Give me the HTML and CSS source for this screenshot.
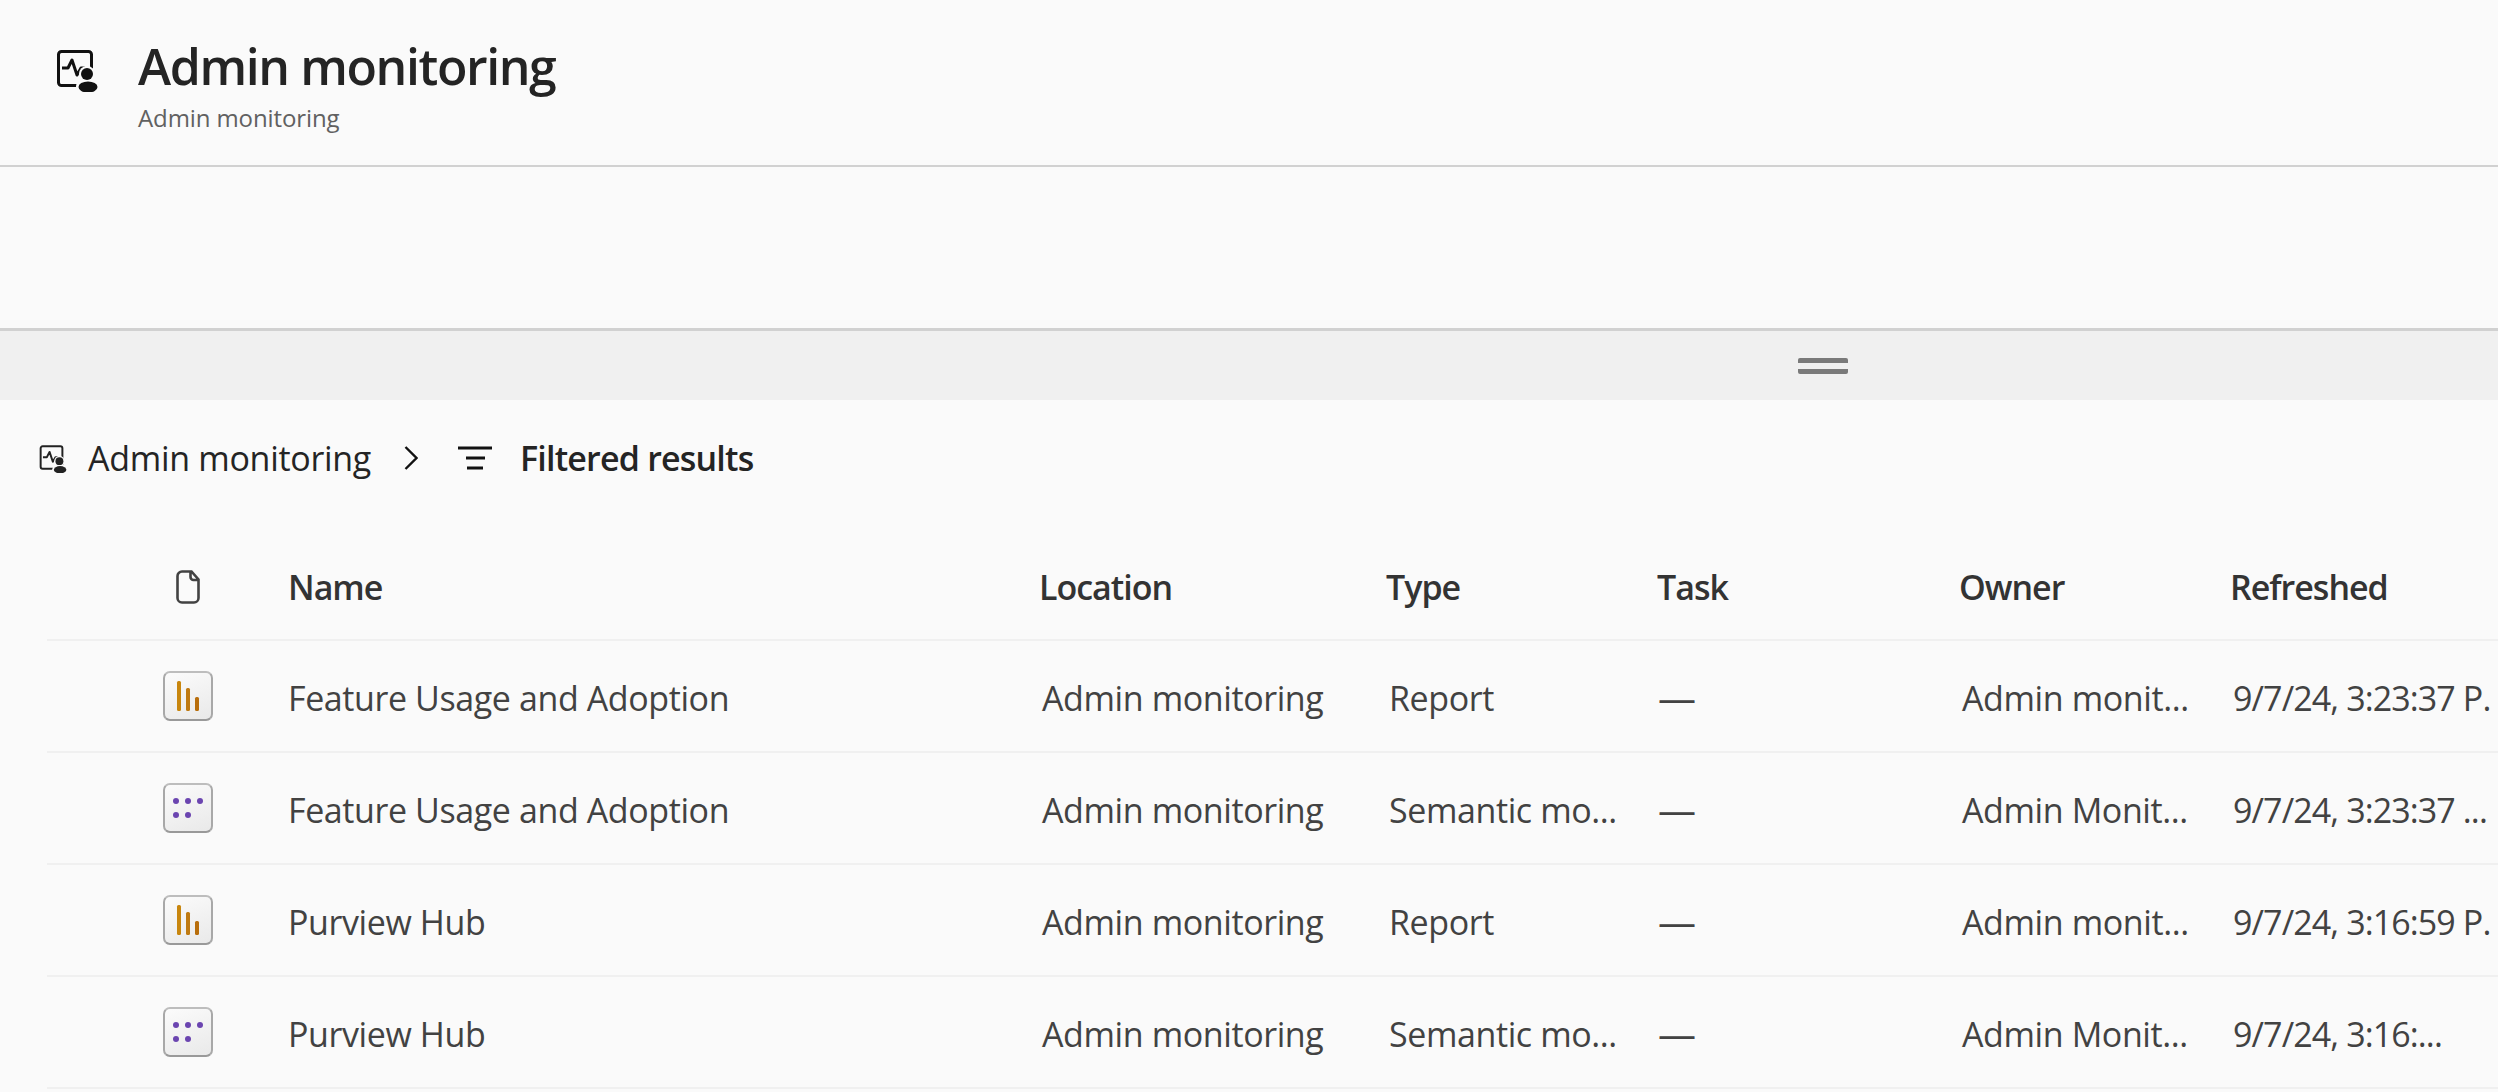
FILE: index.html
```html
<!DOCTYPE html>
<html lang="en">
<head>
  <meta charset="UTF-8">
  <title>Admin monitoring</title>
  <link rel="stylesheet" href="styles.css">
</head>
<body>
  <svg class="defs" width="0" height="0">
    <symbol id="monitor" viewBox="0 0 44 44">
      <rect x="2.5" y="3.5" width="33" height="34" rx="3" fill="none" stroke="currentColor" stroke-width="3"/>
      <path d="M6 20h6l4-8 5 15 4-7h4" fill="none" stroke="currentColor" stroke-width="3" stroke-linejoin="round"/>
      <circle cx="31" cy="26" r="8" fill="#fafafa"/>
      <ellipse cx="32" cy="38.5" rx="12" ry="8" fill="#fafafa"/>
      <circle cx="31" cy="26" r="6" fill="currentColor"/>
      <ellipse cx="32" cy="39" rx="9.5" ry="5.5" fill="currentColor"/>
    </symbol>
    <symbol id="report" viewBox="0 0 50 50">
      <rect x="14" y="10" width="4" height="30" rx="1.5" fill="#c8860e"/>
      <rect x="23" y="17" width="4" height="23" rx="1.5" fill="#bf7a12"/>
      <rect x="32" y="26" width="4" height="14" rx="1.5" fill="#b86e0c"/>
    </symbol>
    <symbol id="model" viewBox="0 0 50 50">
      <circle cx="13" cy="18" r="3" fill="#6b45b0"/>
      <circle cx="25" cy="18" r="3" fill="#6b45b0"/>
      <circle cx="37" cy="18" r="3" fill="#6b45b0"/>
      <circle cx="13" cy="32" r="3" fill="#6b45b0"/>
      <circle cx="25" cy="32" r="3" fill="#6b45b0"/>
    </symbol>
  </svg>

  <header class="page-head">
    <svg class="head-icon" viewBox="0 0 44 44"><use href="#monitor"/></svg>
    <div class="head-text">
      <h1 class="head-title">Admin monitoring</h1>
      <div class="head-sub">Admin monitoring</div>
    </div>
  </header>

  <div class="empty-pane"></div>

  <div class="splitter"><span class="grip"></span></div>

  <nav class="crumbs">
    <svg class="crumb-icon" viewBox="0 0 44 44"><use href="#monitor"/></svg>
    <span class="crumb-link">Admin monitoring</span>
    <svg class="crumb-chevron" viewBox="0 0 14 24"><path d="M1.5 1 12.5 12 1.5 23" fill="none" stroke="currentColor" stroke-width="2.4"/></svg>
    <svg class="crumb-filter" viewBox="0 0 34 24"><path d="M0 2h34M8 12h19M9 22h16" fill="none" stroke="currentColor" stroke-width="3"/></svg>
    <span class="crumb-current">Filtered results</span>
  </nav>

  <section class="list">
    <div class="row row-head">
      <div class="cell-icon">
        <svg class="file-icon" viewBox="0 0 24 34"><path d="M6 1.500h9.500l7 8V28a4.500 4.500 0 0 1-4.500 4.500H6A4.500 4.500 0 0 1 1.500 28V6A4.500 4.500 0 0 1 6 1.500ZM14.500 1.500V7a3 3 0 0 0 3 3h5" fill="none" stroke="#424242" stroke-width="2.600"/></svg>
      </div>
      <div class="cell cell-name">Name</div>
      <div class="cell">Location</div>
      <div class="cell">Type</div>
      <div class="cell">Task</div>
      <div class="cell">Owner</div>
      <div class="cell">Refreshed</div>
    </div>

    <div class="row">
      <div class="cell-icon"><span class="tile"><svg viewBox="0 0 50 50"><use href="#report"/></svg></span></div>
      <div class="cell">Feature Usage and Adoption</div>
      <div class="cell">Admin monitoring</div>
      <div class="cell">Report</div>
      <div class="cell cell-dash">—</div>
      <div class="cell">Admin monit...</div>
      <div class="cell cell-date">9/7/24, 3:23:37 P.</div>
    </div>
    <div class="row">
      <div class="cell-icon"><span class="tile"><svg viewBox="0 0 50 50"><use href="#model"/></svg></span></div>
      <div class="cell">Feature Usage and Adoption</div>
      <div class="cell">Admin monitoring</div>
      <div class="cell">Semantic mo...</div>
      <div class="cell cell-dash">—</div>
      <div class="cell">Admin Monit...</div>
      <div class="cell cell-date">9/7/24, 3:23:37 ...</div>
    </div>
    <div class="row">
      <div class="cell-icon"><span class="tile"><svg viewBox="0 0 50 50"><use href="#report"/></svg></span></div>
      <div class="cell">Purview Hub</div>
      <div class="cell">Admin monitoring</div>
      <div class="cell">Report</div>
      <div class="cell cell-dash">—</div>
      <div class="cell">Admin monit...</div>
      <div class="cell cell-date">9/7/24, 3:16:59 P.</div>
    </div>
    <div class="row">
      <div class="cell-icon"><span class="tile"><svg viewBox="0 0 50 50"><use href="#model"/></svg></span></div>
      <div class="cell">Purview Hub</div>
      <div class="cell">Admin monitoring</div>
      <div class="cell">Semantic mo...</div>
      <div class="cell cell-dash">—</div>
      <div class="cell">Admin Monit...</div>
      <div class="cell cell-date">9/7/24, 3:16:...</div>
    </div>
  </section>
</body>
</html>
```

FILE: styles.css
```css
html, body {
  margin: 0;
  padding: 0;
  height: 100%;
  overflow: hidden;
}

body {
  background: #fafafa;
  color: #242424;
  font-family: "Open Sans", "Noto Sans", sans-serif;
}

.defs {
  display: block;
  height: 0;
}

.page-head {
  display: flex;
  height: 165px;
  border-bottom: 2px solid #d1d1d1;
}

.head-icon {
  width: 44px;
  height: 44px;
  margin: 48px 0 0 56px;
  color: #111;
}

.head-text {
  margin-left: 38px;
  padding-top: 31px;
}

.head-title {
  margin: 0;
  font-size: 50px;
  font-weight: 600;
  line-height: 70px;
  letter-spacing: -1.4px;
}

.head-sub {
  margin-top: 1px;
  font-size: 24px;
  line-height: 32px;
  letter-spacing: -0.1px;
  color: #616161;
}

.empty-pane {
  height: 161px;
}

.splitter {
  display: flex;
  justify-content: center;
  height: 69px;
  padding-left: 1148px;
  border-top: 3px solid #d1d1d1;
  background: #f0f0f0;
}

.grip {
  width: 50px;
  height: 6px;
  margin-top: 27px;
  border-top: 5px solid #7a7a7a;
  border-bottom: 5px solid #7a7a7a;
  border-radius: 2px;
}

.crumbs {
  display: flex;
  align-items: center;
  height: 116px;
  padding-left: 39px;
  font-size: 34px;
}

.crumb-icon {
  width: 29px;
  height: 29px;
  color: #222;
}

.crumb-link {
  margin-left: 20px;
  letter-spacing: -0.3px;
}

.crumb-chevron {
  width: 14px;
  height: 24px;
  margin-left: 33px;
  color: #111;
}

.crumb-filter {
  width: 34px;
  height: 24px;
  margin-left: 40px;
  color: #111;
}

.crumb-current {
  margin-left: 28px;
  font-weight: 600;
  letter-spacing: -0.8px;
}

.list {
  margin-left: 47px;
}

.row {
  display: grid;
  grid-template-columns: 241px 751px 347px 271px 302px 271px 1fr;
  align-items: center;
  height: 110px;
  border-bottom: 2px solid #f0f0f0;
  font-size: 34px;
  color: #424242;
  letter-spacing: -0.4px;
  white-space: nowrap;
}

.row-head {
  height: 123px;
  font-weight: 600;
  color: #333;
  letter-spacing: -1px;
}

.row .cell {
  padding-top: 4px;
  padding-left: 3px;
}

.row .cell:nth-child(2) {
  padding-left: 0;
}

.row .cell-date {
  letter-spacing: -0.9px;
}

.row .cell-dash {
  padding-top: 2px;
  padding-left: 1px;
  font-size: 38px;
}

.row-head .cell {
  padding-top: 18px;
  padding-left: 0;
}

.row-head .cell-name {
  padding-left: 4px;
}

.cell-icon {
  display: flex;
  padding-left: 116px;
}

.row-head .cell-icon {
  padding-top: 18px;
  padding-left: 129px;
}

.file-icon {
  width: 24px;
  height: 34px;
}

.tile {
  display: block;
  width: 50px;
  height: 50px;
  box-sizing: border-box;
  border: 2px solid #a8a8a8;
  border-top-color: #bdbdbd;
  border-bottom-color: #999;
  border-radius: 7px;
  background: linear-gradient(160deg, #fbfbfb, #e9e9e9);
  overflow: hidden;
}

.tile svg {
  display: block;
  width: 50px;
  height: 50px;
  margin: -2px;
}
```
